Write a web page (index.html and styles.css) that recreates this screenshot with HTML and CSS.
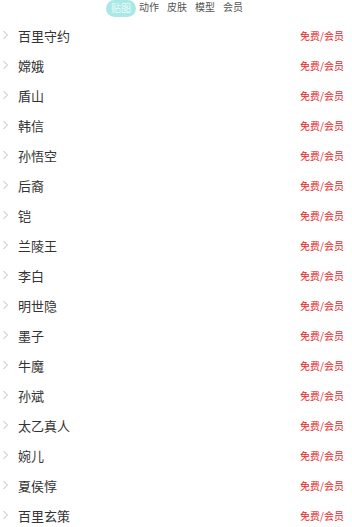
FILE: index.html
```html
<!DOCTYPE html>
<html lang="zh">
<head>
    <meta charset="UTF-8">
    <meta name="viewport" content="width=device-width, initial-scale=1.0">
    <title>英雄列表</title>
    <link rel="stylesheet" href="styles.css">
</head>
<body>

<div class="tabs">
    <span class="tab active">贴图</span>
    <span class="tab">动作</span>
    <span class="tab">皮肤</span>
    <span class="tab">模型</span>
    <span class="tab">会员</span>
</div>

<ul class="list" id="hero-list"></ul>

<script>
    const heroes = ['百里守约', '嫦娥', '盾山', '韩信', '孙悟空', '后裔', '铠', '兰陵王', '李白',
        '明世隐', '墨子', '牛魔', '孙斌', '太乙真人', '婉儿', '夏侯惇', '百里玄策'];
    const list = document.getElementById('hero-list');

    heroes.forEach(name => {
        const li = document.createElement('li');
        li.className = 'row';
        li.innerHTML = `
            <svg class="arrow" width="7" height="10" viewBox="0 0 7 10"><path d="M1.5 1 L5.5 5 L1.5 9" fill="none" stroke="#bbb" stroke-width="1"/></svg>
            <span class="name">${name}</span>
            <span class="tag">免费/会员</span>`;
        list.appendChild(li);
    });
</script>

</body>
</html>
```

FILE: styles.css
```css
body {
    font-family: "Noto Sans CJK SC", "Noto Sans", sans-serif;
    margin: 0;
    padding: 0;
    background-color: #fff;
}

.tabs {
    display: flex;
    justify-content: center;
    align-items: flex-start;
    height: 20px;
    gap: 6px;
    padding-left: 2px;
}

.tab {
    font-size: 10px;
    line-height: 14px;
    color: #555;
    padding: 0 1px;
}

.tab.active {
    background-color: #a9e8e6;
    color: #eafafa;
    border-radius: 9px;
    padding: 1px 5px 2px;
    margin-right: -4px;
    margin-left: -4px;
}

.list {
    list-style: none;
    margin: 0;
    padding: 0;
}

.row {
    display: flex;
    align-items: center;
    height: 30px;
    padding: 0 8px 0 2px;
}

.arrow {
    flex-shrink: 0;
}

.name {
    margin-left: 9px;
    font-size: 13px;
    color: #333;
    flex: 1;
}

.tag {
    font-size: 10px;
    color: #e8262a;
}
```
